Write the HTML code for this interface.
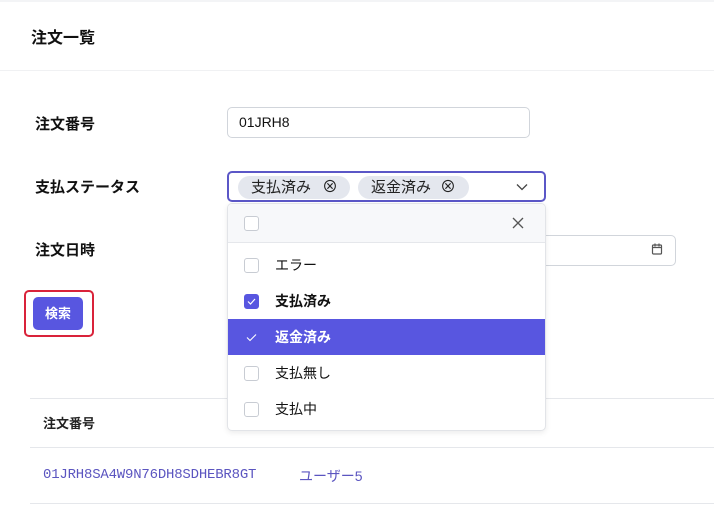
<!DOCTYPE html>
<html><head><meta charset="utf-8"><style>
*{box-sizing:border-box;margin:0;padding:0}
body{width:714px;height:505px;background:#fff;font-family:"Liberation Sans","Noto Sans CJK JP",sans-serif;color:#111;position:relative;overflow:hidden}
.a{position:absolute}
.lbl{font-size:15px;font-weight:bold;left:35px}
.inp{border:1px solid #d1d5db;border-radius:5px;background:#fff}
.tag{position:absolute;top:3px;height:23px;background:#e4e7ee;border-radius:12px;font-size:15px;line-height:23px;padding-left:13px;color:#222}
.cb{position:absolute;left:16px;width:15px;height:15px;border:1px solid #c8ccd3;border-radius:3px;background:#fff}
.it{position:absolute;left:0;width:318px;height:36px;font-size:14px;line-height:36px}
.it span{position:absolute;left:47px}
</style></head><body>
<div class="a" style="left:0;top:0;width:714px;height:2px;background:#f3f4f6"></div>
<div class="a" style="left:31px;top:24px;font-size:16px;font-weight:bold">注文一覧</div>
<div class="a" style="left:0;top:70px;width:714px;height:1px;background:#f0f1f3"></div>

<div class="a lbl" style="top:113px">注文番号</div>
<div class="a lbl" style="top:176px">支払ステータス</div>
<div class="a lbl" style="top:239px">注文日時</div>

<div class="a inp" style="left:227px;top:107px;width:303px;height:31px;font-size:14px;line-height:29px;padding-left:11px">01JRH8</div>

<div class="a inp" style="left:227px;top:235px;width:449px;height:31px"></div>
<svg class="a" style="left:650px;top:242px" width="14" height="14" viewBox="0 0 14 14" fill="none" stroke="#555" stroke-width="1.2"><rect x="2.5" y="3" width="9" height="9" rx="1"/><path d="M2.5 5.5h9M5 1.5v3M9 1.5v3"/></svg>

<div class="a" style="left:30px;top:398px;width:684px;height:1px;background:#e5e7eb"></div>
<div class="a" style="left:43px;top:413px;font-size:13px;font-weight:bold;color:#222">注文番号</div>
<div class="a" style="left:30px;top:447px;width:684px;height:1px;background:#e5e7eb"></div>
<div class="a" style="left:43px;top:467px;font-family:'Liberation Mono',monospace;font-size:14px;letter-spacing:-0.2px;color:#5b55c0">01JRH8SA4W9N76DH8SDHEBR8GT</div>
<div class="a" style="left:299px;top:466px;font-size:14px;color:#5b55c0">ユーザー5</div>
<div class="a" style="left:30px;top:503px;width:684px;height:1px;background:#e5e7eb"></div>

<div class="a" style="left:227px;top:171px;width:319px;height:31px;border:2px solid #5b57c7;border-radius:5px;background:#fff">
 <div class="tag" style="left:9px;width:112px">支払済み<span style="position:absolute;left:84px;top:0;font-size:16px">⊗</span></div>
 <div class="tag" style="left:129px;width:111px">返金済み<span style="position:absolute;left:82px;top:0;font-size:16px">⊗</span></div>
 <svg class="a" style="left:287px;top:9px" width="12" height="10" viewBox="0 0 12 10" fill="none" stroke="#444" stroke-width="1.3"><path d="M1 2.5l5 5 5-5"/></svg>
</div>

<div class="a" style="left:227px;top:203px;width:319px;height:228px;border:1px solid #e2e4e8;border-radius:5px;background:#fff;box-shadow:0 2px 6px rgba(0,0,0,.08);overflow:hidden;z-index:5">
 <div class="a" style="left:0;top:0;width:318px;height:39px;background:#f7f8fa;border-bottom:1px solid #e5e7eb">
  <div class="cb" style="top:12px"></div>
  <svg class="a" style="left:284px;top:13px" width="12" height="12" viewBox="0 0 12 12" stroke="#555" stroke-width="1.3"><path d="M1 1l10 10M11 1L1 11"/></svg>
 </div>
 <div class="it" style="top:43px"><div class="cb" style="top:11px"></div><span>エラー</span></div>
 <div class="it" style="top:79px;font-weight:bold"><div class="cb" style="top:11px;background:#5856e0;border-color:#5856e0"><svg width="13" height="13" viewBox="0 0 13 13" fill="none" stroke="#fff" stroke-width="1.2" style="position:absolute;left:0;top:0"><path d="M3 6.5l2.5 2.5 4.5-5"/></svg></div><span>支払済み</span></div>
 <div class="it" style="top:115px;background:#5856e0;color:#fff;font-weight:bold"><svg width="13" height="13" viewBox="0 0 13 13" fill="none" stroke="#fff" stroke-width="1.1" style="position:absolute;left:17px;top:12px"><path d="M2 6.5l3 3 6-6"/></svg><span>返金済み</span></div>
 <div class="it" style="top:151px"><div class="cb" style="top:11px"></div><span>支払無し</span></div>
 <div class="it" style="top:187px"><div class="cb" style="top:11px"></div><span>支払中</span></div>
</div>

<div class="a" style="left:24px;top:290px;width:70px;height:47px;border:2px solid #d9233a;border-radius:5px"></div>
<div class="a" style="left:33px;top:297px;width:50px;height:33px;background:#5856e0;border-radius:5px;color:#fff;font-size:13px;font-weight:bold;text-align:center;line-height:33px">検索</div>
</body></html>
